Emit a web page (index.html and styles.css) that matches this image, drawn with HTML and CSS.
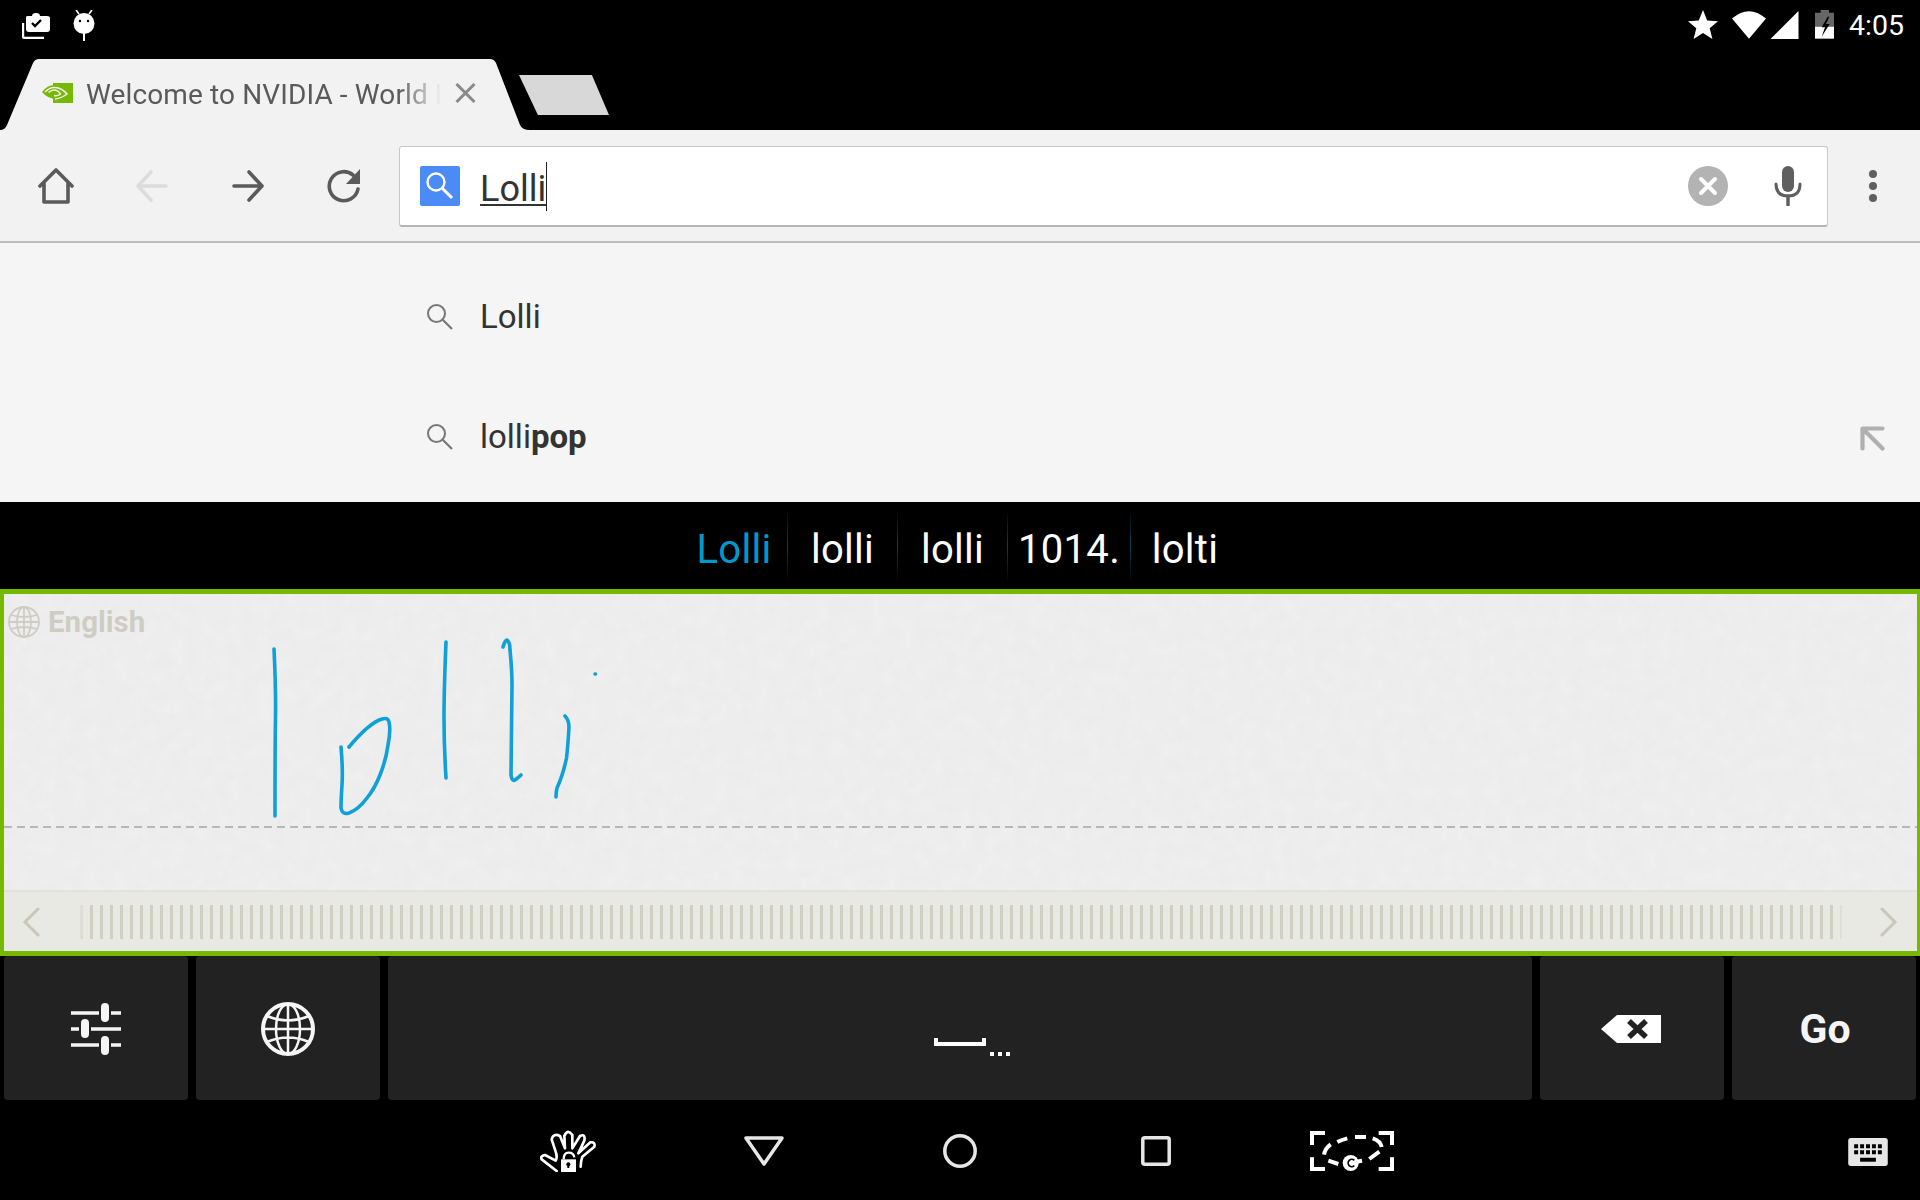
FILE: index.html
```html
<!DOCTYPE html>
<html lang="en">
<head>
  <meta charset="UTF-8" />
  <title>Browser with handwriting keyboard</title>
  <link rel="stylesheet" href="styles.css">
</head>
<body>
  <div class="status-bar">
    <div class="status-group">
      <svg class="ic-bag" viewBox="0 0 28 26"><path d="M1 10v13q0 2 2 2h19" fill="none" stroke="#fff" stroke-width="2.4"/><path d="M5 3h5q0-3 4-3t4 3h7q3 0 3 2v11q0 3-3 3H7q-3 0-3-3V5q0-2 1-2z" fill="#fff"/><path d="M10 10l3 3 6-6" fill="none" stroke="#000" stroke-width="2.4"/></svg>
      <svg class="ic-droid" viewBox="0 0 22 31"><path d="M3 0l3 4M19 0l-3 4" stroke="#fff" stroke-width="1.6"/><ellipse cx="11" cy="13.500" rx="10.500" ry="10.500" fill="#fff"/><circle cx="7" cy="11" r="1.200"/><circle cx="15" cy="11" r="1.200"/><path d="M11 23v8" stroke="#fff" stroke-width="2"/></svg>
    </div>
    <div class="status-group right">
      <svg class="ic-star" viewBox="0 0 30 29"><path d="M15 0l4.200 10.600 10.800.7-8.300 7 2.700 10.700L15 23l-9.400 6 2.700-10.700-8.300-7 10.800-.7z" fill="#fff"/></svg>
      <svg class="ic-wifi" viewBox="398 33 102 83"><path d="M449 116L398 55q26-22 51-22t51 22z" fill="#fff"/></svg>
      <svg class="ic-signal" viewBox="513 33 85 85"><path d="M513 118L598 33v85z" fill="#fff"/></svg>
      <svg class="ic-battery" viewBox="648 30 57 87"><path d="M665 30h25v8h15v42h-57V38h17z" fill="#666"/><path d="M648 80h57v36h-57z" fill="#fff"/><path d="M686 50l-18 32h10l-10 28 24-38h-11l10-22z"/></svg>
      <span class="clock">4:05</span>
    </div>
  </div>

  <div class="tab-strip">
    <div class="tab">
      <svg class="favicon" viewBox="0 0 31 20"><path d="M11 0h20v20H11z" fill="#76b900"/><path d="M0 9Q6 1 14 2v14Q6 16 0 9z" fill="#76b900"/><path d="M3 9Q8 4 13 4.500 20 5 25 11 20 15 13 16" fill="none" stroke="#f2f2f2" stroke-width="1.600"/><path d="M6.500 9.500Q10 6.500 13 7 17 8 18.500 11 15 13.500 12 12.500" fill="none" stroke="#f2f2f2" stroke-width="1.500"/></svg>
      <span class="tab-title">Welcome to NVIDIA - World Leader in Visual Computing</span>
      <svg class="tab-close" viewBox="0 0 21 20"><path d="M1.500 1l18 18M19.500 1l-18 18" stroke="#8a8a8a" stroke-width="3"/></svg>
    </div>
    <div class="tab-new"></div>
  </div>

  <div class="toolbar">
    <div class="tool"><svg width="36" height="36" viewBox="0 0 36 36"><path d="M2 18L18 2l16 16M6 15v19h24V15" fill="none" stroke="#5a5a5a" stroke-width="3.600" stroke-linecap="round" stroke-linejoin="round"/></svg></div>
    <div class="tool"><svg width="32" height="32" viewBox="0 0 32 32"><path d="M30 16H3M15 2L2 16l13 14" fill="none" stroke="#dcdcdc" stroke-width="3.600" stroke-linecap="round" stroke-linejoin="round"/></svg></div>
    <div class="tool"><svg width="32" height="32" viewBox="0 0 32 32"><path d="M2 16h27M17 2l13 14-13 14" fill="none" stroke="#5a5a5a" stroke-width="3.600" stroke-linecap="round" stroke-linejoin="round"/></svg></div>
    <div class="tool"><svg width="34" height="34" viewBox="0 0 34 34"><path d="M31 20A14.500 14.500 0 1 1 26 6" fill="none" stroke="#5a5a5a" stroke-width="3.600" stroke-linecap="round"/><path d="M33 0v15H19z" fill="#5a5a5a"/></svg></div>

    <div class="omnibox">
      <div class="engine"><svg width="30" height="30" viewBox="0 0 30 30"><circle cx="11" cy="11" r="8.500" fill="none" stroke="#fff" stroke-width="2.400"/><path d="M17 17l10 10" stroke="#fff" stroke-width="3"/></svg></div>
      <span class="typed">Lolli</span>
      <div class="omni-actions">
        <svg width="40" height="40" viewBox="0 0 40 40"><circle cx="20" cy="20" r="20" fill="#b3b3b3"/><path d="M13 13l14 14M27 13L13 27" stroke="#fff" stroke-width="4" stroke-linecap="round"/></svg>
        <svg class="ic-mic" width="28" height="40" viewBox="0 0 28 40"><rect x="8" y="0" width="12" height="26" rx="6" fill="#5f5f5f"/><path d="M2 18q0 12 12 12t12-12" fill="none" stroke="#5f5f5f" stroke-width="3" stroke-linecap="round"/><path d="M14 30v9" stroke="#5f5f5f" stroke-width="3.500" stroke-linecap="round"/></svg>
      </div>
    </div>

    <div class="menu-dots"><i></i><i></i><i></i></div>
  </div>

  <div class="suggestions">
    <div class="suggest-row">
      <svg class="ic-find" viewBox="0 0 27 27"><circle cx="10.500" cy="10.500" r="8.500" fill="none" stroke="#777" stroke-width="2"/><path d="M17 17l9 9" stroke="#777" stroke-width="2.200"/></svg>
      <span>Lolli</span>
    </div>
    <div class="suggest-row">
      <svg class="ic-find" viewBox="0 0 27 27"><circle cx="10.500" cy="10.500" r="8.500" fill="none" stroke="#777" stroke-width="2"/><path d="M17 17l9 9" stroke="#777" stroke-width="2.200"/></svg>
      <span>lolli<b>pop</b></span>
      <svg class="ic-refine" viewBox="0 0 25 25"><path d="M2.500 22.500V2.500H22.500M3.500 3.500L22.500 22.500" fill="none" stroke="#b0b0b0" stroke-width="4.200" stroke-linecap="round" stroke-linejoin="round"/></svg>
    </div>
  </div>

  <div class="candidates">
    <span class="cand active">Lolli</span>
    <span class="cand">lolli</span>
    <span class="cand">lolli</span>
    <span class="cand">1014.</span>
    <span class="cand">lolti</span>
  </div>

  <div class="write-pad">
    <div class="write-area">
      <svg class="ink" viewBox="4 594 1913 296" preserveAspectRatio="none">
        <defs>
          <filter id="paper" x="0" y="0" width="100%" height="100%">
            <feTurbulence type="fractalNoise" baseFrequency="0.07" numOctaves="3" seed="4"/>
            <feColorMatrix type="matrix" values="0 0 0 0 1  0 0 0 0 1  0 0 0 0 1  0.35 0 0 0 -0.12"/>
          </filter>
        </defs>
        <rect x="4" y="594" width="1913" height="296" filter="url(#paper)"/>
        <path class="baseline" d="M4 827H1917"/>
        <g class="strokes">
          <path d="M274 649Q276 690 275.500 718T275 816"/>
          <path d="M341 747Q343 770 342 785T341 808Q342 815 349 813 358 810 367 798 375 788 380 775 386 760 388 745 391 730 389 722 388 717 382 719 369 723 349 747"/>
          <path d="M446 642Q444 690 444 718T446 778"/>
          <path d="M503 647Q505 640 507 640 510 642 510 650 512 670 512 685L511 775Q512 782 515 780T521 775"/>
          <path d="M565 716Q569 720 569 727 568 745 566.500 758 563 775 557 788 556 792 556 797"/>
          <path d="M595 674h.5"/>
        </g>
      </svg>
      <div class="lang-tag">
        <svg width="32" height="32" viewBox="0 0 32 32"><g fill="none" stroke="#cfcdc3" stroke-width="1.800"><circle cx="16" cy="16" r="15"/><ellipse cx="16" cy="16" rx="7" ry="15"/><path d="M16 1v30M1 16h30M3 9q13 4 26 0M3 23q13-4 26 0"/></g></svg>
        <span>English</span>
      </div>
    </div>
    <div class="scroll-strip">
      <svg width="18" height="30" viewBox="0 0 18 30"><path d="M16 2L3 15l13 13" fill="none" stroke="#c9c6ba" stroke-width="3" stroke-linecap="round"/></svg>
      <div class="ticks"></div>
      <svg width="18" height="30" viewBox="0 0 18 30"><path d="M2 2l13 13L2 28" fill="none" stroke="#c9c6ba" stroke-width="3" stroke-linecap="round"/></svg>
    </div>
  </div>

  <div class="keys">
    <div class="key">
      <svg width="50" height="52" viewBox="0 0 50 52"><g stroke="#f5f5f5" stroke-width="3.500"><path d="M0 10h50M0 26h50M0 42h50"/></g><g fill="#f5f5f5" stroke="#222" stroke-width="2"><rect x="29" y="-1" width="10" height="21" rx="5"/><rect x="9" y="15" width="10" height="21" rx="5"/><rect x="29" y="32" width="10" height="21" rx="5"/></g></svg>
    </div>
    <div class="key">
      <svg width="54" height="54" viewBox="0 0 54 54"><g fill="none" stroke="#f5f5f5"><circle cx="27" cy="27" r="25" stroke-width="4"/><ellipse cx="27" cy="27" rx="12" ry="25" stroke-width="2.500"/><path d="M27 2v50M2 27h50M6 14q21 9 42 0M6 40q21-9 42 0" stroke-width="2.500"/></g></svg>
    </div>
    <div class="key space">
      <svg class="ic-space" width="76" height="18" viewBox="0 0 76 18"><path d="M2 0v6h48V0" fill="none" stroke="#fff" stroke-width="4"/><path d="M56 14h4v4h-4zM64 14h4v4h-4zM72 14h4v4h-4z" fill="#fff"/></svg>
    </div>
    <div class="key">
      <svg class="ic-back" width="60" height="28" viewBox="0 0 60 28"><path d="M16 0h44v28H16L0 14z" fill="#fff"/><path d="M28 6l17 16M45 6L28 22" stroke="#222" stroke-width="5.500"/></svg>
    </div>
    <div class="key go">Go</div>
  </div>

  <div class="nav-bar">
    <div></div>
    <div class="nav-buttons">
      <div class="nav-btn">
        <svg width="56" height="42" viewBox="125 60 168 126"><path d="M175 183L130 148Q125 138 140 135L172 152Q178 140 172 125L160 88Q165 68 185 78L200 115 198 78Q208 55 222 75V115L245 78Q262 70 258 92L240 130 276 97Q292 95 288 110L252 140Q247 155 247 170" fill="none" stroke="#fff" stroke-width="8" stroke-linecap="round" stroke-linejoin="round"/><rect x="188" y="148" width="45" height="38" fill="#fff"/><path d="M196 148q0-20 15-20t17 14" fill="none" stroke="#fff" stroke-width="7"/><circle cx="210" cy="163" r="6"/><path d="M207 163h6v11h-6z"/></svg>
      </div>
      <div class="nav-btn">
        <svg width="40" height="30" viewBox="0 0 40 30"><path d="M2 2h36L20 28z" fill="none" stroke="#e6e6e6" stroke-width="3.500" stroke-linejoin="round"/></svg>
      </div>
      <div class="nav-btn">
        <svg width="34" height="34" viewBox="0 0 34 34"><circle cx="17" cy="17" r="15.200" fill="none" stroke="#e6e6e6" stroke-width="3.500"/></svg>
      </div>
      <div class="nav-btn">
        <svg width="30" height="30" viewBox="0 0 30 30"><rect x="1.800" y="1.800" width="26.400" height="26.400" rx="2" fill="none" stroke="#e6e6e6" stroke-width="3.500"/></svg>
      </div>
      <div class="nav-btn">
        <svg width="84" height="40" viewBox="630 66 252 120"><g fill="none" stroke="#fff" stroke-width="12"><path d="M675 72H636V108M836 72H876V108M636 145V180H675M836 180H876V145"/><path d="M672 137Q675 118 692 106M712 99Q725 92 742 88M765 84H798M818 88Q842 96 845 114M838 128L808 150M715 165L685 155"/></g><circle cx="752" cy="162" r="24" fill="#fff"/><path d="M763 154a11 11 0 1 0 0 16" fill="none" stroke="#000" stroke-width="5"/><path d="M770 158l16-3" stroke="#fff" stroke-width="12"/></svg>
      </div>
    </div>
    <div class="nav-side">
      <svg width="40" height="28" viewBox="1044 773 120 85"><rect x="1044" y="773" width="120" height="85" rx="8" fill="#e6e6e6"/><path d="M1062 798h84M1062 816h84" stroke="#000" stroke-width="12" stroke-dasharray="12 6"/><rect x="1080" y="833" width="48" height="12"/></svg>
    </div>
  </div>
</body>
</html>
```

FILE: styles.css
```css
* {
  box-sizing: border-box;
}

html, body {
  margin: 0;
  padding: 0;
}

body {
  width: 1920px;
  height: 1200px;
  overflow: hidden;
  background: #000;
  font-family: Roboto, "Liberation Sans", sans-serif;
  color: #333;
}

svg {
  display: block;
  flex: none;
}

/* status bar */
.status-bar {
  height: 48px;
  padding: 10px 16px 0 22px;
  display: flex;
  justify-content: space-between;
  align-items: flex-start;
}

.status-group {
  display: flex;
  align-items: flex-start;
}

.ic-bag {
  width: 28px;
  height: 26px;
  margin-top: 3px;
}

.ic-droid {
  width: 22px;
  height: 31px;
  margin-left: 23px;
}

.ic-star {
  width: 30px;
  height: 29px;
}

.ic-wifi {
  width: 34px;
  height: 28px;
  margin: 1px 0 0 14px;
}

.ic-signal {
  width: 29px;
  height: 28px;
  margin: 1px 0 0 4px;
}

.ic-battery {
  width: 19px;
  height: 29px;
  margin-left: 16px;
}

.clock {
  margin: -2px 0 0 15px;
  font-size: 28.5px;
  line-height: 36px;
  color: #fff;
}

/* tabs */
.tab-strip {
  height: 82px;
  display: flex;
  align-items: flex-end;
}

.tab {
  width: 530px;
  height: 71px;
  padding: 24px 0 0 42px;
  display: flex;
  align-items: flex-start;
  background: #f2f2f2;
  clip-path: path("M0 71Q5 71 7 66L33 4Q35 0 39 0H490Q494 0 496 4L520 66Q522 71 530 71Z");
}

.favicon {
  width: 31px;
  height: 20px;
}

.tab-title {
  width: 355px;
  margin: -5px 0 0 13px;
  font-size: 28px;
  letter-spacing: 0.12px;
  line-height: 34px;
  color: #5a5a5a;
  white-space: nowrap;
  overflow: hidden;
  -webkit-mask-image: linear-gradient(to right, #000 88%, transparent 100%);
  mask-image: linear-gradient(to right, #000 88%, transparent 100%);
}

.tab-close {
  width: 21px;
  height: 20px;
  margin-left: 14px;
}

.tab-new {
  width: 90px;
  height: 40px;
  margin: 0 0 15px -11px;
  background: #d8d8d8;
  clip-path: polygon(0 0, 81% 0, 100% 100%, 21% 100%);
}

/* toolbar */
.toolbar {
  height: 113px;
  padding: 16px 0 16px 8px;
  display: flex;
  align-items: flex-start;
  background: #f2f2f2;
  border-bottom: 2px solid #bdbdbd;
}

.tool {
  width: 96px;
  height: 80px;
  display: flex;
  align-items: center;
  justify-content: center;
}

.omnibox {
  width: 1429px;
  height: 81px;
  margin-left: 7px;
  padding: 0 25px 0 20px;
  display: flex;
  align-items: center;
  background: #fff;
  border: 1px solid #c8c8c8;
  border-bottom: 2px solid #b5b5b5;
  border-radius: 3px;
}

.engine {
  width: 40px;
  height: 40px;
  padding: 5px;
  border-radius: 2px;
  background: #4a8bf5;
}

.typed {
  margin-left: 20px;
  padding-top: 6px;
  font-size: 36px;
  line-height: 43px;
  color: #333;
  border-right: 1px solid #222;
  text-decoration: underline;
  text-decoration-thickness: 2px;
  text-underline-offset: 3px;
}

.omni-actions {
  margin-left: auto;
  display: flex;
  align-items: center;
}

.ic-mic {
  margin-left: 46px;
}

.menu-dots {
  width: 90px;
  height: 80px;
  display: flex;
  flex-direction: column;
  align-items: center;
  justify-content: center;
  gap: 4px;
}

.menu-dots i {
  width: 8px;
  height: 8px;
  border-radius: 50%;
  background: #5f5f5f;
}

/* suggestions */
.suggestions {
  height: 259px;
  padding-top: 13px;
  background: #f5f5f5;
}

.suggest-row {
  height: 120px;
  padding: 0 35px 0 426px;
  display: flex;
  align-items: center;
  font-size: 33px;
  color: #333;
}

.suggest-row b {
  font-weight: 700;
}

.ic-find {
  width: 27px;
  height: 27px;
  margin-right: 27px;
}

.ic-refine {
  width: 25px;
  height: 25px;
  margin: 4px 0 0 auto;
}

/* candidate bar */
.candidates {
  height: 87px;
  display: flex;
  justify-content: center;
  align-items: center;
}

.cand {
  min-width: 110px;
  height: 72px;
  padding: 7px 10px 0;
  display: flex;
  align-items: center;
  justify-content: center;
  font-size: 40px;
  letter-spacing: 0.3px;
  color: #fff;
  border-right: 1px solid;
  border-image: linear-gradient(to bottom, #000, #0d4058 50%, #000) 1;
}

.cand.active {
  min-width: 107px;
  color: #0099cc;
}

.cand:last-child {
  min-width: 108px;
  border-right: none;
}

/* handwriting pad */
.write-pad {
  height: 367px;
  display: flex;
  flex-direction: column;
  border: 4px solid #76b900;
  border-width: 5px 3px 5px 4px;
}

.write-area {
  position: relative;
  flex: 1;
  background: #ececec;
}

.ink {
  position: absolute;
  top: 0;
  left: 0;
  width: 1913px;
  height: 296px;
}

.baseline {
  fill: none;
  stroke: #a5a5a5;
  stroke-width: 1.500;
  stroke-dasharray: 8 5;
}

.strokes path {
  fill: none;
  stroke: #0ea0d6;
  stroke-width: 3.600;
  stroke-linecap: round;
  stroke-linejoin: round;
}

.lang-tag {
  position: relative;
  padding: 11px 0 0 4px;
  display: flex;
  align-items: center;
  gap: 8px;
  font-size: 29.5px;
  font-weight: 700;
  color: #cfcdc3;
}

.scroll-strip {
  height: 61px;
  padding: 0 19px 0 18px;
  display: flex;
  align-items: center;
  background: #e9e9e4;
  border-top: 2px solid #e2e2dd;
}

.ticks {
  flex: 1;
  height: 34px;
  margin: 0 38px 0 40px;
  background: repeating-linear-gradient(to right, #d0d0c2 0, #d0d0c2 3px, transparent 3px, transparent 10px);
  -webkit-mask-image: linear-gradient(to right, rgb(0 0 0 / 0.3) 0, #000 8px, #000 calc(100% - 8px), rgb(0 0 0 / 0.3) 100%);
  mask-image: linear-gradient(to right, rgb(0 0 0 / 0.3) 0, #000 8px, #000 calc(100% - 8px), rgb(0 0 0 / 0.3) 100%);
}

/* bottom keys */
.keys {
  height: 144px;
  padding: 0 4px;
  display: flex;
  gap: 8px;
}

.key {
  width: 184px;
  padding-top: 2px;
  display: flex;
  align-items: center;
  justify-content: center;
  background: #222;
  border-radius: 4px;
}

.key.space {
  flex: 1;
  padding-top: 38px;
}

.ic-space {
  margin-left: 24px;
}

.ic-back {
  margin-left: -3px;
}

.key.go {
  padding-left: 2px;
  font-size: 41px;
  font-weight: 700;
  color: #f5f5f5;
}

/* navigation */
.nav-bar {
  height: 100px;
  display: grid;
  grid-template-columns: 1fr auto 1fr;
  align-items: center;
}

.nav-buttons {
  padding-top: 2px;
  display: flex;
  align-items: center;
}

.nav-btn {
  width: 196px;
  display: flex;
  justify-content: center;
}

.nav-side {
  padding: 4px 32px 0 0;
  display: flex;
  justify-content: flex-end;
}
```
